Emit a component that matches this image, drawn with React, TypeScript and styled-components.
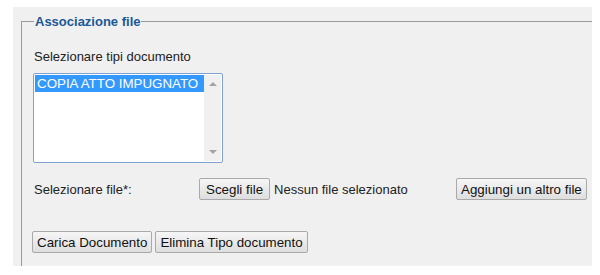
import React from "react";
import styled, { createGlobalStyle } from "styled-components";

const GlobalStyle = createGlobalStyle`
  body {
    margin: 0;
    background: #ffffff;
    font-family: "Liberation Sans", Arial, sans-serif;
    font-size: 13px;
    color: #222;
  }
`;

const Panel = styled.div`
  margin: 7px 0 0 13px;
  width: 579px;
  height: 259px;
  padding: 7px 0 0 8px;
  box-sizing: border-box;
  background: #f0f0f0;
  overflow: hidden;
`;

const Fieldset = styled.fieldset`
  margin: 0;
  width: 620px;
  min-height: 300px;
  padding: 0 12px;
  border: 1px solid #9a9a9a;
  box-sizing: border-box;
`;

const Legend = styled.legend`
  padding: 0 1px;
  margin-left: 0;
  font-weight: bold;
  font-size: 13px;
  line-height: 15px;
  color: #1b5894;
`;

const Label = styled.div`
  margin-top: 20px;
  line-height: 15px;
`;

const ListBox = styled.div`
  margin-top: 9px;
  margin-left: -1px;
  width: 190px;
  height: 90px;
  box-sizing: border-box;
  border: 1px solid #7ea3d3;
  border-radius: 2px;
  background: #fff;
  display: flex;
  padding: 1px;
`;

const Options = styled.div`
  flex: 1;
`;

const Option = styled.div<{ $selected?: boolean }>`
  font-size: 13.33px;
  line-height: 17px;
  padding: 0 2px;
  background: ${(p) => (p.$selected ? "#3399ff" : "transparent")};
  color: ${(p) => (p.$selected ? "#fff" : "#222")};
  white-space: nowrap;
  overflow: hidden;
`;

const Scrollbar = styled.div`
  width: 17px;
  background: #f0f0f0;
  display: flex;
  flex-direction: column;
  justify-content: space-between;
  align-items: center;
  padding: 7px 0;
`;

const Arrow = styled.div<{ $down?: boolean }>`
  width: 0;
  height: 0;
  border-left: 4px solid transparent;
  border-right: 4px solid transparent;
  ${(p) =>
    p.$down
      ? "border-top: 4px solid #a3a3a3;"
      : "border-bottom: 4px solid #a3a3a3;"}
`;

const FileRow = styled.div`
  margin-top: 15px;
  display: grid;
  grid-template-columns: 165px 257px auto;
  align-items: center;
`;

const FilePick = styled.div`
  display: flex;
  align-items: center;
  gap: 4px;
`;

const Button = styled.button<{ $wide?: boolean }>`
  font-family: "Liberation Sans", Arial, sans-serif;
  font-size: 13.33px;
  color: #111;
  height: 22px;
  padding: ${(p) => (p.$wide ? "0 6px" : "0 4px")};
  border: 1px solid #a9a9a9;
  border-radius: 2px;
  background: linear-gradient(#f6f6f6, #dedede);
  cursor: pointer;
  justify-self: start;
`;

const Actions = styled.div`
  margin-top: 31px;
  margin-left: -2px;
  display: flex;
  gap: 3px;
`;

const App = () => {
  return (
    <>
      <GlobalStyle />
      <Panel>
        <Fieldset>
          <Legend>Associazione file</Legend>
          <Label>Selezionare tipi documento</Label>
          <ListBox>
            <Options>
              <Option $selected>COPIA ATTO IMPUGNATO</Option>
            </Options>
            <Scrollbar>
              <Arrow />
              <Arrow $down />
            </Scrollbar>
          </ListBox>
          <FileRow>
            <span>Selezionare file*:</span>
            <FilePick>
              <Button type="button" $wide>
                Scegli file
              </Button>
              <span>Nessun file selezionato</span>
            </FilePick>
            <Button type="button">Aggiungi un altro file</Button>
          </FileRow>
          <Actions>
            <Button type="button">Carica Documento</Button>
            <Button type="button">Elimina Tipo documento</Button>
          </Actions>
        </Fieldset>
      </Panel>
    </>
  );
};

export default App;
